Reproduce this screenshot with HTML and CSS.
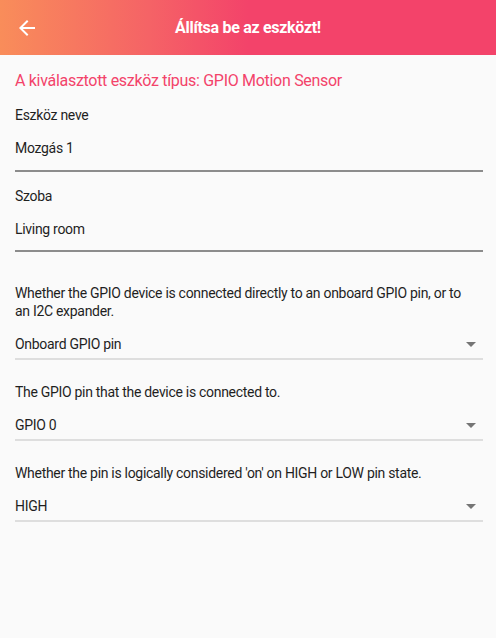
FILE: index.html
```html
<!DOCTYPE html>
<html lang="hu">
<head>
<meta charset="utf-8">
<title>Állítsa be az eszközt!</title>
<link rel="stylesheet" href="styles.css">
</head>
<body>
<header class="appbar">
  <button class="back" aria-label="Vissza">
    <svg viewBox="0 0 24 24" width="24" height="24"><path d="M20 11H7.83l5.59-5.59L12 4l-8 8 8 8 1.41-1.41L7.83 13H20v-2z" fill="#fff"/></svg>
  </button>
  <h1 class="title">Állítsa be az eszközt!</h1>
</header>
<main class="content">
  <div class="type">A kiválasztott eszköz típus: GPIO Motion Sensor</div>

  <div class="field first">
    <div class="label">Eszköz neve</div>
    <div class="value">Mozgás 1</div>
  </div>

  <div class="field">
    <div class="label">Szoba</div>
    <div class="value">Living room</div>
  </div>

  <div class="select-block first-select">
    <div class="desc">Whether the GPIO device is connected directly to an onboard GPIO pin, or to an I2C expander.</div>
    <div class="select"><span>Onboard GPIO pin</span><span class="caret"></span></div>
  </div>

  <div class="select-block">
    <div class="desc">The GPIO pin that the device is connected to.</div>
    <div class="select"><span>GPIO 0</span><span class="caret"></span></div>
  </div>

  <div class="select-block">
    <div class="desc">Whether the pin is logically considered 'on' on HIGH or LOW pin state.</div>
    <div class="select"><span>HIGH</span><span class="caret"></span></div>
  </div>
</main>
</body>
</html>
```

FILE: styles.css
```css
html, body {
  margin: 0;
  padding: 0;
}
body {
  width: 496px;
  min-height: 638px;
  background: #fafafa;
  font-family: Roboto, "Liberation Sans", sans-serif;
  color: #1f1f1f;
  font-size: 14px;
  letter-spacing: -0.3px;
}
.appbar {
  height: 55px;
  display: flex;
  align-items: center;
  position: relative;
  background: linear-gradient(90deg, #f98d5a 0%, #f56366 30%, #f3436a 50%, #f3436a 100%);
}
.back {
  border: 0;
  background: none;
  padding: 0;
  margin-left: 15px;
  width: 24px;
  height: 24px;
  display: flex;
}
.title {
  flex: 1;
  margin: 0 39px 0 0;
  text-align: center;
  color: #fff;
  font-size: 16px;
  font-weight: 700;
  letter-spacing: -0.3px;
}
.content {
  padding: 0 13px 0 15px;
  display: flex;
  flex-direction: column;
}
.type {
  margin-top: 16px;
  color: #f3436a;
  font-size: 16px;
  line-height: 20px;
}
.field {
  margin-top: 14px;
}
.label, .value, .desc, .select span {
  line-height: 20px;
}
.label {
  margin-bottom: 13px;
}
.value {
  padding-bottom: 12px;
  border-bottom: 2px solid #8c8c8c;
}
.field + .field .value {
  padding-bottom: 11px;
}
.select-block {
  margin-top: 23px;
}
.select-block.first-select {
  margin-top: 32px;
}
.desc {
  line-height: 18px;
  padding-right: 10px;
}
.select {
  margin-top: 14px;
  display: flex;
  align-items: center;
  justify-content: space-between;
  padding-bottom: 4px;
  border-bottom: 2px solid #dedede;
}
.caret {
  width: 0;
  height: 0;
  border-left: 5px solid transparent;
  border-right: 5px solid transparent;
  border-top: 5px solid #757575;
  margin-right: 7px;
}
```
